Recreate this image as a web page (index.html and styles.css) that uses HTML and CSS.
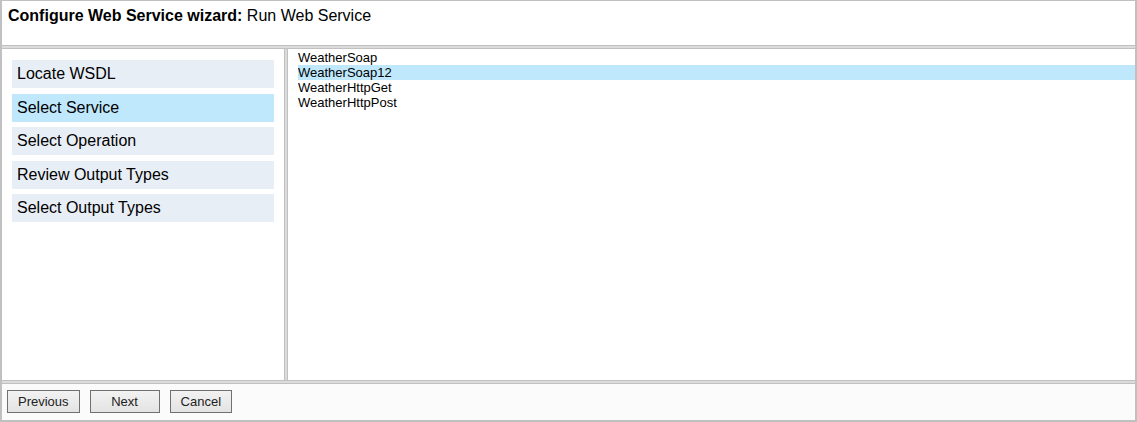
FILE: index.html
```html
<!DOCTYPE html>
<html>
<head>
<meta charset="utf-8">
<title>Configure Web Service wizard</title>
<link rel="stylesheet" href="styles.css">
</head>
<body>
<div class="frame">
  <div class="header"><b>Configure Web Service wizard:</b> Run Web Service</div>
  <div class="main">
    <div class="steps">
      <div class="step">Locate WSDL</div>
      <div class="step active">Select Service</div>
      <div class="step">Select Operation</div>
      <div class="step">Review Output Types</div>
      <div class="step">Select Output Types</div>
    </div>
    <div class="content">
      <ul class="list">
        <li>WeatherSoap</li>
        <li class="selected">WeatherSoap12</li>
        <li>WeatherHttpGet</li>
        <li>WeatherHttpPost</li>
      </ul>
    </div>
  </div>
  <div class="footer">
    <button class="btn">Previous</button>
    <button class="btn btn-wide">Next</button>
    <button class="btn">Cancel</button>
  </div>
</div>
</body>
</html>
```
FILE: styles.css
```css
html, body {
  margin: 0;
  padding: 0;
  background: #ffffff;
}
body {
  font-family: "Liberation Sans", Arial, sans-serif;
  color: #000;
}
.frame {
  box-sizing: border-box;
  width: 1137px;
  height: 422px;
  border: 2px solid #c0c0c0;
  border-top-width: 1px;
  background: #dcdcdc;
  display: flex;
  flex-direction: column;
}
.header {
  height: 44px;
  box-sizing: content-box;
  background: #fff;
  border-bottom: 1px solid #c0c0c0;
  margin-bottom: 2px;
  padding: 0 6px;
  font-size: 16px;
  line-height: 18px;
  padding-top: 6px;
  height: 38px;
}
.main {
  flex: 1;
  display: flex;
  border-top: 1px solid #c0c0c0;
  border-bottom: 1px solid #c0c0c0;
  min-height: 0;
}
.steps {
  width: 262px;
  background: #fff;
  border-right: 1px solid #c0c0c0;
  padding: 11px 10px 0 10px;
  display: flex;
  flex-direction: column;
  gap: 5.5px;
}
.step {
  height: 28px;
  line-height: 28px;
  padding-left: 5px;
  background: #e8eef6;
  font-size: 16px;
}
.step.active {
  background: #bfe8fd;
}
.content {
  flex: 1;
  margin-left: 2px;
  border-left: 1px solid #c0c0c0;
  background: #fff;
  padding-top: 1px;
}
.list {
  list-style: none;
  margin: 0 0 0 10px;
  padding: 0;
  font-size: 13px;
  line-height: 15px;
}
.list li {
  height: 15px;
}
.list li.selected {
  background: #bfe8fd;
}
.footer {
  height: 36px;
  margin-top: 2px;
  border-top: 1px solid #c0c0c0;
  background: #fbfbfb;
  display: flex;
  align-items: flex-start;
  gap: 10px;
  padding: 6px 5px 0 5px;
  box-sizing: border-box;
  height: 37px;
}
.btn {
  height: 23px;
  padding: 0 10px;
  border: 1px solid #707070;
  border-radius: 0;
  background: linear-gradient(#f2f2f2, #e3e3e3);
  font-family: "Liberation Sans", Arial, sans-serif;
  font-size: 13px;
  color: #222;
  margin: 0;
}
.btn-wide {
  min-width: 70px;
}
```
